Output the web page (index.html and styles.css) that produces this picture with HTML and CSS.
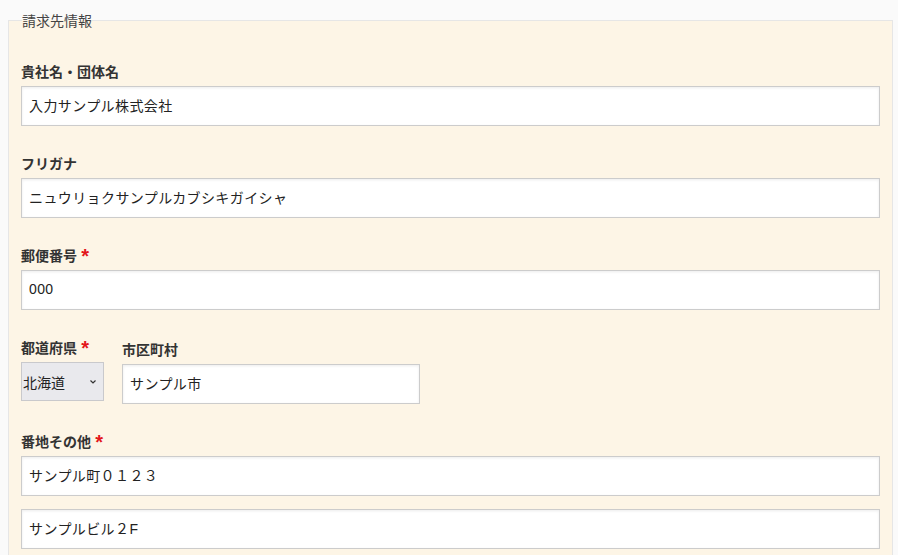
FILE: index.html
```html
<!DOCTYPE html>
<html lang="ja">
<head>
<meta charset="utf-8">
<link rel="stylesheet" href="styles.css">
</head>
<body>
<fieldset class="box">
  <legend class="legend">請求先情報</legend>
  <div class="group">
    <label class="label">貴社名・団体名</label>
    <input class="input" type="text" value="入力サンプル株式会社">
  </div>
  <div class="group">
    <label class="label">フリガナ</label>
    <input class="input" type="text" value="ニュウリョクサンプルカブシキガイシャ">
  </div>
  <div class="group">
    <label class="label">郵便番号 <span class="req">*</span></label>
    <input class="input" type="text" value="000">
  </div>
  <div class="group row">
    <div class="col">
      <label class="label">都道府県 <span class="req">*</span></label>
      <div class="select">
        <span class="select-text">北海道</span>
        <svg class="chev" width="8" height="6" viewBox="0 0 8 6"><path d="M1.5 1.5 L4 4 L6.5 1.5" fill="none" stroke="#333" stroke-width="1.2"/></svg>
      </div>
    </div>
    <div class="col city">
      <label class="label">市区町村</label>
      <input class="input city-input" type="text" value="サンプル市">
    </div>
  </div>
  <div class="group">
    <label class="label">番地その他 <span class="req">*</span></label>
    <input class="input" type="text" value="サンプル町０１２３">
    <input class="input second" type="text" value="サンプルビル２F">
  </div>
</fieldset>
</body>
</html>
```
FILE: styles.css
```css
html, body {
  margin: 0;
  padding: 0;
  background: #fafafa;
}
body {
  padding: 8px 5px 0 8px;
  font-family: "Noto Sans CJK JP", "Noto Sans", sans-serif;
  color: #222;
}
.box {
  margin: 0;
  border: 1px solid #e6e6e6;
  background: #fdf5e6;
  padding: 29px 12px 20px 12px;
  display: flex;
  flex-direction: column;
  gap: 27px;
}
.legend {
  font-size: 14px;
  line-height: 24px;
  color: #444;
  padding: 0;
  margin-left: 1px;
}
.group {
  display: flex;
  flex-direction: column;
}
.label {
  display: block;
  font-size: 14px;
  line-height: 20px;
  font-weight: bold;
  color: #333;
  margin-bottom: 5px;
}
.req {
  display: inline-block;
  font-family: "Liberation Sans", sans-serif;
  color: #e3161b;
  font-size: 20px;
  font-weight: bold;
  line-height: 14px;
  height: 14px;
  vertical-align: top;
  margin-top: 4px;
  margin-left: 1px;
}
.input {
  box-sizing: border-box;
  width: 100%;
  height: 40px;
  border: 1px solid #cccccc;
  background: #fff;
  box-shadow: inset 0 1px 3px rgba(0,0,0,0.08);
  padding: 0 7px 3px 7px;
  font-family: "Liberation Sans", "Noto Sans CJK JP", sans-serif;
  font-size: 14px;
  letter-spacing: 0.4px;
  color: #222;
  margin: 0;
  outline: none;
}
.second {
  margin-top: 13px;
}
.row {
  flex-direction: row;
  gap: 18px;
  align-items: flex-start;
}
.col {
  display: flex;
  flex-direction: column;
}
.city {
  margin-top: 2px;
}
.select {
  box-sizing: border-box;
  width: 83px;
  height: 39px;
  border: 1px solid #c9c9cc;
  background: #e9e9ed;
  display: flex;
  align-items: center;
  justify-content: space-between;
  padding: 0 6px 0 1px;
  font-size: 14px;
  color: #222;
}
.city-input {
  width: 298px;
}
```
